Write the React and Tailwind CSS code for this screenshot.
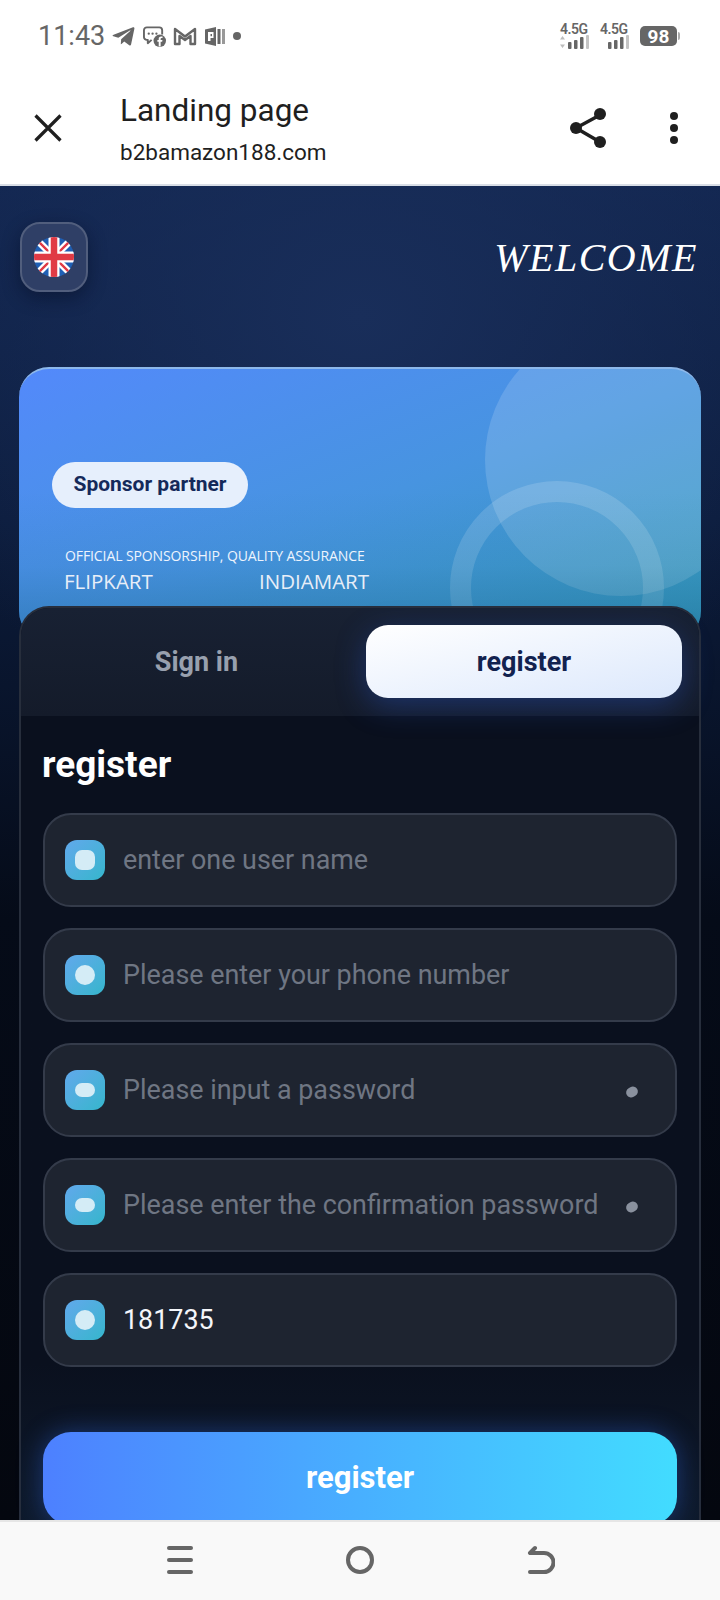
import React from "react";
import { FaTelegramPlane } from "react-icons/fa";

const Roboto = "font-['Roboto',sans-serif]";

function Signal({ arrows }) {
  return (
    <div className="flex w-[29px] flex-col items-start">
      <span className="font-['Roboto',sans-serif] text-[14px] font-semibold leading-[13px] tracking-[-0.5px] text-[#666]">4.5G</span>
      <svg width="29" height="14" viewBox="0 0 29 14" className="mt-[-1px]">
        {arrows && <path d="M2.5 1 L5 4.5 H0 Z M2.5 13 L5 9.5 H0 Z" fill="#bdbdbd" />}
        <rect x="8" y="7" width="3.5" height="7" rx="1" fill="#666" />
        <rect x="14" y="5" width="3.5" height="9" rx="1" fill="#666" />
        <rect x="20" y="2" width="3.5" height="12" rx="1" fill="#666" />
        <rect x="26" y="0" width="3" height="14" rx="1" fill="#c4c4c4" />
      </svg>
    </div>
  );
}

function StatusBar() {
  return (
    <div className="flex h-[60px] shrink-0 items-center justify-between bg-white pl-[38px] pr-[40px] pt-[12px]">
      <div className="flex items-center">
        <span className={`${Roboto} text-[27px] leading-none text-[#666]`}>11:43</span>
        <FaTelegramPlane className="ml-[6px] text-[#666]" size={25} />
        <svg width="25" height="23" viewBox="0 0 26 24" className="ml-[6px]">
          <path d="M5 2.5 H18 a3 3 0 0 1 3 3 V10 M10 15.5 L6 19 V15.5 H5 a3 3 0 0 1 -3 -3 V5.5 a3 3 0 0 1 3 -3" fill="none" stroke="#666" strokeWidth="2" strokeLinejoin="round" />
          <circle cx="7" cy="9" r="1.2" fill="#666" />
          <circle cx="11" cy="9" r="1.2" fill="#666" />
          <circle cx="15" cy="9" r="1.2" fill="#666" />
          <circle cx="18.5" cy="16.5" r="6.5" fill="#666" />
          <path d="M19.4 22.5 V17.5 H21 L21.3 15.6 H19.4 V14.6 c0 -.6 .3 -1 1 -1 H21.4 V12 H19.9 c-1.7 0 -2.5 1 -2.5 2.4 V15.6 H16 V17.5 H17.4 V22.5 Z" fill="#fff" />
        </svg>
        <svg width="24" height="20" viewBox="0 0 24 20" className="ml-[6px]">
          <path d="M2 18 V3 L12 10.5 L22 3 V18 H17.5 V10 L12 14 L6.5 10 V18 Z" fill="none" stroke="#666" strokeWidth="2.4" strokeLinejoin="round" />
        </svg>
        <svg width="21" height="21" viewBox="0 0 21 21" className="ml-[8px]">
          <path d="M0 3.5 L11 1 V20 L0 17.5 Z" fill="#666" />
          <rect x="12.5" y="3" width="3" height="15" fill="#666" />
          <rect x="17" y="3" width="3" height="15" fill="#999" />
          <path d="M3 6 H8.5 V12 H5.5 V15 H3 Z" fill="#fff" />
          <rect x="5.5" y="8" width="1.5" height="2.2" fill="#666" />
        </svg>
        <span className="ml-[7px] h-[8px] w-[8px] rounded-full bg-[#666]" />
      </div>
      <div className="flex items-center">
        <Signal arrows />
        <div className="ml-[11px]"><Signal /></div>
        <div className={`${Roboto} ml-[11px] flex h-[20px] w-[37px] items-center justify-center rounded-[5px] bg-[#666] text-[19px] font-bold leading-none text-white`}>98</div>
        <span className="ml-[1px] h-[8px] w-[2px] rounded-r-sm bg-[#aaa]" />
      </div>
    </div>
  );
}

function Header() {
  return (
    <header className="flex h-[126px] shrink-0 items-start border-b-2 border-[#d9dee6] bg-white">
      <svg width="28" height="28" viewBox="0 0 28 28" className="ml-[34px] mt-[54px]">
        <path d="M1.5 1.5 L26.5 26.5 M26.5 1.5 L1.5 26.5" stroke="#1f1f1f" strokeWidth="3.2" fill="none" />
      </svg>
      <div className={`${Roboto} ml-[58px] pt-[32px] text-[#1f1f1f]`}>
        <div className="text-[31.5px] leading-[38px]">Landing page</div>
        <div className="mt-[8px] text-[22.5px] leading-[28px]">b2bamazon188.com</div>
      </div>
      <svg width="40" height="44" viewBox="0 0 40 44" className="ml-auto mt-[46px]">
        <path d="M30 9 L6 22 L30 36" fill="none" stroke="#1f1f1f" strokeWidth="3.5" />
        <circle cx="30" cy="8" r="6" fill="#1f1f1f" />
        <circle cx="6" cy="22" r="6" fill="#1f1f1f" />
        <circle cx="30" cy="36" r="6" fill="#1f1f1f" />
      </svg>
      <div className="ml-[60px] mr-[42px] mt-[52px] flex flex-col gap-[4px]">
        <span className="h-[8px] w-[8px] rounded-full bg-[#1f1f1f]" />
        <span className="h-[8px] w-[8px] rounded-full bg-[#1f1f1f]" />
        <span className="h-[8px] w-[8px] rounded-full bg-[#1f1f1f]" />
      </div>
    </header>
  );
}

function Flag() {
  return (
    <svg width="40" height="40" viewBox="0 0 40 40">
      <defs>
        <clipPath id="flag"><circle cx="20" cy="20" r="20" /></clipPath>
      </defs>
      <g clipPath="url(#flag)">
        <rect width="40" height="40" fill="#1f5fb4" />
        <path d="M0 0 L40 40 M40 0 L0 40" stroke="#fff" strokeWidth="7" />
        <path d="M0 0 L40 40 M40 0 L0 40" stroke="#e03a45" strokeWidth="2.4" />
        <path d="M20 0 V40 M0 20 H40" stroke="#fff" strokeWidth="11" />
        <path d="M20 0 V40 M0 20 H40" stroke="#e03a45" strokeWidth="6.5" />
      </g>
    </svg>
  );
}

const brand = "font-['Open_Sans',sans-serif]";

function Banner() {
  return (
    <section className="relative h-[274px] overflow-hidden rounded-[30px] border-t-2 border-[#8db8ea] bg-gradient-to-br from-[#5389fb] via-[#4794e0] to-[#339ab8]">
      <div className="absolute left-[466px] top-[-45px] h-[272px] w-[272px] rounded-full bg-white/15" />
      <div className="absolute left-[431px] top-[112px] h-[214px] w-[214px] rounded-full border-[21px] border-white/15" />
      <div className="absolute inset-x-0 bottom-0 h-[150px] bg-gradient-to-b from-transparent via-[#1a5f90]/10 via-50% to-[#1a5f90]/45" />
      <div className="relative pl-[33px] pt-[93px]">
        <div className={`${Roboto} flex h-[46px] w-[196px] items-center justify-center rounded-full bg-[#e6effc] text-[21px] font-bold text-[#14295a]`}>Sponsor partner</div>
        <div className={`${brand} ml-[13px] mt-[38px] whitespace-nowrap text-[14px] font-medium leading-[20px] tracking-[-0.1px] text-[#eef4fd]`}>OFFICIAL SPONSORSHIP, QUALITY ASSURANCE</div>
        <div className={`${brand} ml-[12px] mt-[1px] flex text-[20.5px] font-medium leading-[28px] text-[#e8eef8]`}>
          <span className="w-[195px]">FLIPKART</span>
          <span>INDIAMART</span>
        </div>
      </div>
    </section>
  );
}

function Field({ inner, text, value, dot }) {
  return (
    <div className="flex h-[94px] items-center rounded-[28px] border-2 border-[#343b4a] bg-[#1e2430] pl-[20px] pr-[37px]">
      <span className="flex h-[40px] w-[40px] shrink-0 items-center justify-center rounded-[12px] bg-gradient-to-br from-[#60a8ec] to-[#33b6cc]">
        <span className={`${inner} bg-[#d4ecf6]`} />
      </span>
      <span className={`${Roboto} ml-[18px] pt-[1px] text-[26.9px] leading-none ${value ? "text-[#f4f6fa]" : "text-[#6f7683]"}`}>{text}</span>
      {dot && <span className="ml-auto mt-[3px] h-[10px] w-[12px] -rotate-[30deg] rounded-full bg-[#8a919e]" />}
    </div>
  );
}

function Card() {
  return (
    <section className="relative -mt-[35px] rounded-t-[30px] border-2 border-b-0 border-[#272e3c] bg-[#0a101e]">
      <div className="flex h-[108px] items-start rounded-t-[28px] bg-gradient-to-b from-[#182133] to-[#141b2a] pl-[6px] pr-[17px] pt-[17px]">
        <div className={`${Roboto} flex h-[73px] flex-1 items-center justify-center pt-[2px] text-[27px] font-bold text-[#98a0ae]`}>Sign in</div>
        <div className={`${Roboto} flex h-[73px] w-[316px] items-center justify-center rounded-[22px] bg-gradient-to-br from-white to-[#dce8fc] pt-[2px] text-[27px] font-bold text-[#12224f] shadow-[0_8px_30px_rgba(45,95,220,0.35)]`}>register</div>
      </div>
      <div className="bg-gradient-to-b from-[#0a101e] from-80% to-[#0e1a2c] px-[22px]">
        <h2 className={`${Roboto} -ml-px pt-[28px] text-[37px] font-bold leading-[42px] text-white`}>register</h2>
        <div className="mt-[27px] flex flex-col gap-[21px]">
          <Field inner="h-[20px] w-[20px] rounded-[7px]" text="enter one user name" />
          <Field inner="h-[20px] w-[20px] rounded-full" text="Please enter your phone number" />
          <Field inner="h-[14px] w-[20px] rounded-full" text="Please input a password" dot />
          <Field inner="h-[14px] w-[20px] rounded-full" text="Please enter the confirmation password" dot />
          <Field inner="h-[20px] w-[20px] rounded-full" text="181735" value />
        </div>
        <button className={`${Roboto} mt-[65px] flex h-[93px] w-full items-center justify-center rounded-[28px] bg-gradient-to-r from-[#4d80ff] to-[#42dcff] text-[31px] font-bold text-white shadow-[0_0_26px_rgba(50,110,240,0.4)]`}>register</button>
      </div>
    </section>
  );
}

function NavBar() {
  return (
    <nav className="flex h-[80px] shrink-0 items-start border-t-2 border-[#e6e6e6] bg-[#f9f9f9] pl-[167px] pt-[24px]">
      <div className="flex h-[28px] w-[26px] flex-col justify-between">
        <span className="h-[4px] rounded-full bg-[#666]" />
        <span className="h-[4px] rounded-full bg-[#666]" />
        <span className="h-[4px] rounded-full bg-[#666]" />
      </div>
      <span className="ml-[153px] h-[28px] w-[28px] rounded-full border-[4px] border-[#666]" />
      <svg width="28" height="30" viewBox="0 0 28 30" className="ml-[153px] -mt-px">
        <path d="M3 27 H17 a8.5 8.5 0 0 0 0 -19 H3 M3 8 L8 3" fill="none" stroke="#666" strokeWidth="4" strokeLinecap="round" />
      </svg>
    </nav>
  );
}

export default function App() {
  return (
    <div className="flex h-[1600px] w-[720px] flex-col overflow-hidden bg-white">
      <StatusBar />
      <Header />
      <main className="min-h-0 flex-1 overflow-hidden bg-[radial-gradient(ellipse_520px_420px_at_50%_130px,#192e5a_0%,rgba(20,40,84,0)_100%),linear-gradient(to_bottom,#122650_0%,#0c1c3c_25%,#050b18_55%,#04070f_100%)] px-[19px]">
        <div className="flex h-[181px] items-start justify-between pl-[1px] pr-[3px] pt-[36px]">
          <div className="flex h-[70px] w-[68px] items-center justify-center rounded-[20px] border-2 border-[#515e7d] bg-[#2f3f66] shadow-[0_6px_18px_rgba(5,12,30,0.45)]">
            <Flag />
          </div>
          <div className="mt-[16px] font-['Liberation_Serif',serif] text-[40px] font-medium italic leading-[40px] tracking-[1.5px] text-white">WELCOME</div>
        </div>
        <Banner />
        <Card />
      </main>
      <NavBar />
    </div>
  );
}
